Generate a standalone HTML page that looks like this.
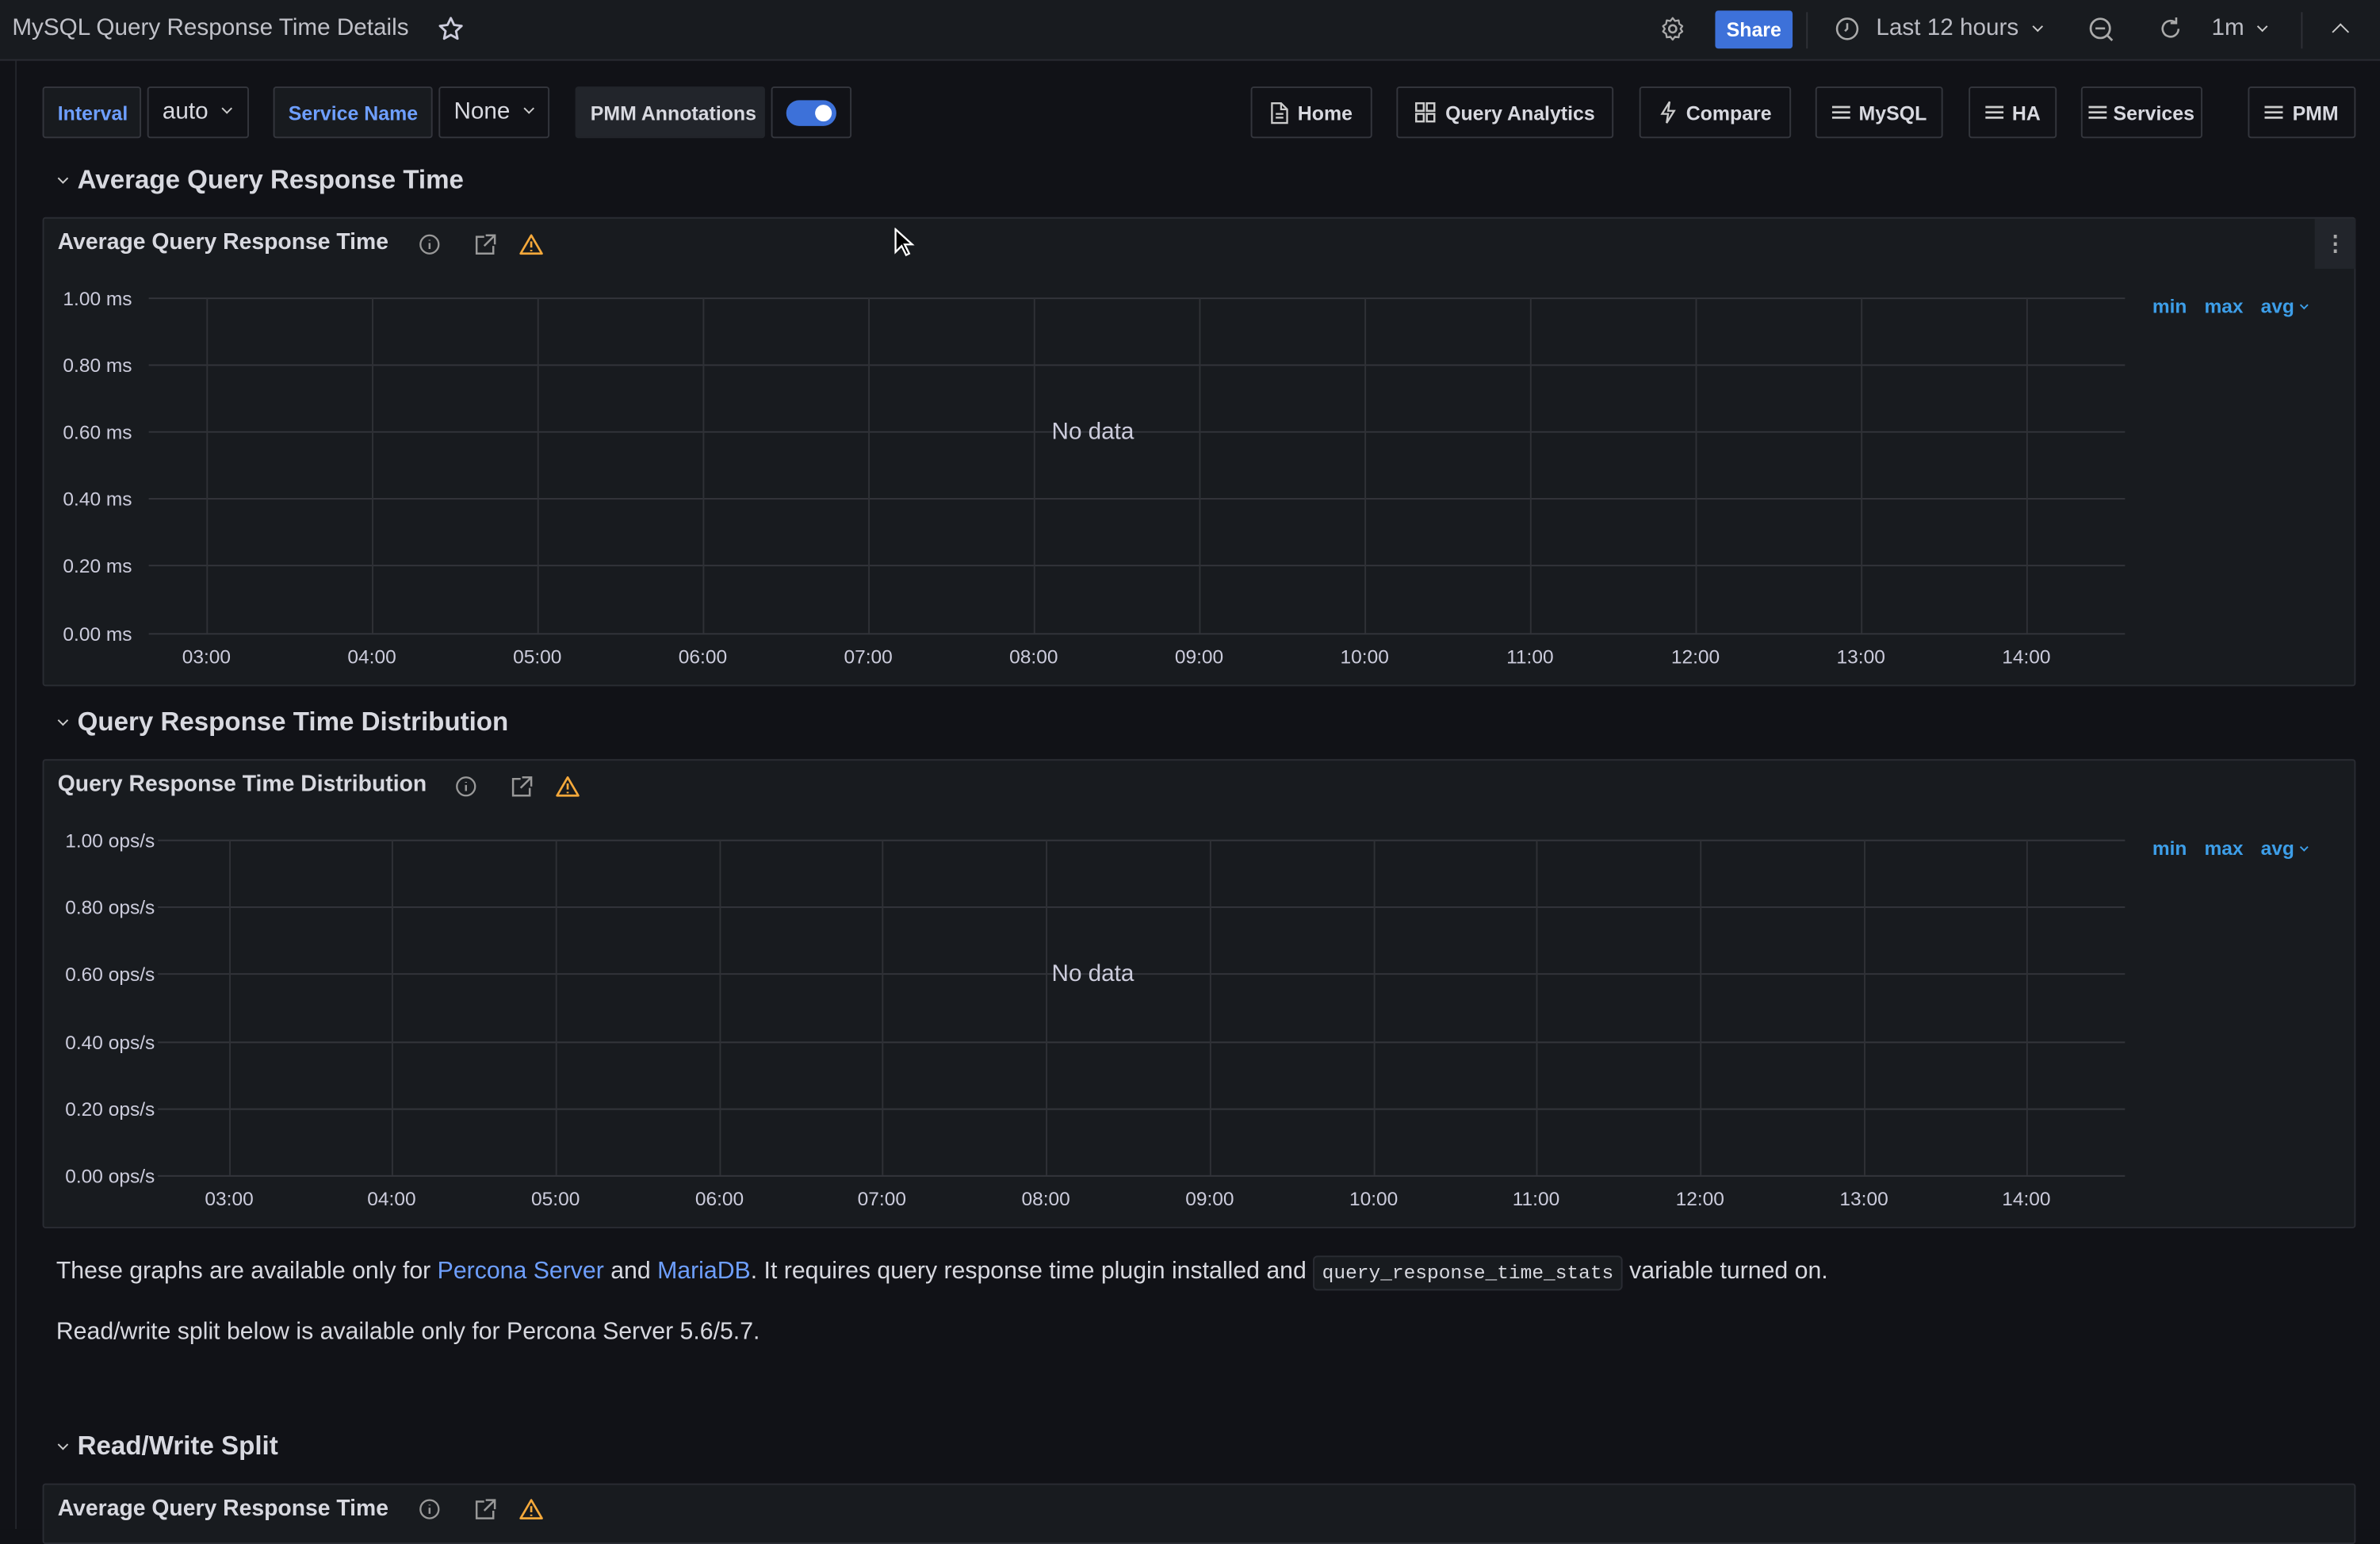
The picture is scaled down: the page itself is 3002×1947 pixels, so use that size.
<!DOCTYPE html>
<html><head><meta charset="utf-8"><style>
*{box-sizing:border-box;margin:0;padding:0}
html,body{width:3002px;height:1928px;overflow:hidden;background:#111217}
#w{position:absolute;left:0;top:0;width:1568px;height:1007px;transform:scale(1.91454,1.9146);transform-origin:0 0;font-family:"Liberation Sans",sans-serif;color:#ccccdc;background:#111217}
.a{position:absolute}
.hdr{left:0;top:0;width:1568px;height:40px;background:#181b1f;border-bottom:1px solid #2a2c33}
.btn{position:absolute;height:34px;top:57px;border:1px solid #34363d;border-radius:2px;background:#111217;font-size:13.5px;color:#d8d9e0;display:flex;align-items:center;padding:0 9px;gap:6px;white-space:nowrap}
.btn svg{flex-shrink:0}
.btn.r{justify-content:center;font-weight:bold;font-size:13px;padding:0 4px}
.lbl{color:#6e9fff;background:#181b1f;font-weight:bold;font-size:13px}
.panel{position:absolute;left:28px;width:1524px;background:#181b1f;border:1px solid #2a2c33;border-radius:2px}
.pt{position:absolute;left:9px;top:8px;font-size:14.8px;color:#d8d9e0;font-weight:bold}
.sec{position:absolute;left:37px;font-size:17.3px;font-weight:bold;color:#d8d9e0}
.sec:before{content:"";position:absolute;left:2px;top:7px;width:4px;height:4px;border-right:1.3px solid #ccc;border-bottom:1.3px solid #ccc;transform:rotate(45deg)}
.sec span{margin-left:14px}
svg text{font-family:"Liberation Sans",sans-serif}
.leg{position:absolute;top:50px;left:1389px;font-size:12.8px;font-weight:bold;color:#3d9ee8;word-spacing:8px}
.chev{display:inline-block;width:5px;height:5px;border-right:1.2px solid #ccc;border-bottom:1.2px solid #ccc;transform:rotate(45deg);margin-left:6px;position:relative;top:-3px}
</style></head><body><div id="w">
<div class="a hdr"></div>
<div class="a" style="left:8px;top:10px;font-size:15.5px;color:#c0c1c8">MySQL Query Response Time Details</div>
<svg class="a" style="left:288px;top:10px" width="18" height="18" viewBox="0 0 24 24"><path d="M12 2.5l2.9 6.1 6.6.8-4.9 4.6 1.3 6.6L12 17.3 6.1 20.6l1.3-6.6L2.5 9.4l6.6-.8z" fill="none" stroke="#ccccdc" stroke-width="2" stroke-linejoin="round"/></svg>
<svg class="a" style="left:1093px;top:10px" width="18" height="18" viewBox="0 0 24 24"><circle cx="12" cy="12" r="3.2" fill="none" stroke="#aaa" stroke-width="1.8"/><path d="M12 2.5l2 2.6 3.2-.6.6 3.2 2.7 1.9-1.6 2.4 1.6 2.4-2.7 1.9-.6 3.2-3.2-.6-2 2.6-2-2.6-3.2.6-.6-3.2L3.5 14.4 5.1 12 3.5 9.6l2.7-1.9.6-3.2 3.2.6z" fill="none" stroke="#aaa" stroke-width="1.6" stroke-linejoin="round"/></svg>
<div class="a" style="left:1130px;top:7px;width:51px;height:25px;background:#3d71d9;border-radius:2px;color:#fff;font-size:13px;font-weight:bold;text-align:center;line-height:25px">Share</div>
<div class="a" style="left:1190px;top:8px;width:1px;height:24px;background:#2f3137"></div>
<svg class="a" style="left:1208px;top:10px" width="18" height="18" viewBox="0 0 24 24"><circle cx="12" cy="12" r="9" fill="none" stroke="#aaa" stroke-width="1.8"/><path d="M12 7v5l-2 2" fill="none" stroke="#aaa" stroke-width="1.8"/></svg>
<div class="a" style="left:1236px;top:10px;font-size:15.5px;color:#bbbcc4;white-space:nowrap">Last 12 hours<span class="chev" style="margin-left:10px"></span></div>
<svg class="a" style="left:1375px;top:10px" width="19" height="19" viewBox="0 0 24 24"><circle cx="11" cy="11" r="8" fill="none" stroke="#aaa" stroke-width="1.8"/><path d="M7 11h8M17 17l4 4" stroke="#aaa" stroke-width="1.8"/></svg>
<svg class="a" style="left:1421px;top:10px" width="18" height="18" viewBox="0 0 24 24"><path d="M19 12a7 7 0 1 1-2-5M17 2v5h-5" fill="none" stroke="#aaa" stroke-width="1.8"/></svg>
<div class="a" style="left:1457px;top:10px;font-size:15.5px;color:#bbbcc4">1m<span class="chev" style="margin-left:9px"></span></div>
<div class="a" style="left:1516px;top:8px;width:1px;height:24px;background:#2f3137"></div>
<div class="a" style="left:1538px;top:17px;width:8px;height:8px;border-left:1.5px solid #ccc;border-top:1.5px solid #ccc;transform:rotate(45deg)"></div>
<div class="a" style="left:10px;top:40px;width:1px;height:967px;background:#24262c"></div>

<div class="btn lbl" style="left:28px;width:65px">Interval</div>
<div class="btn" style="left:97px;width:67px;font-size:15.5px">auto<span class="chev" style="margin-left:4px"></span></div>
<div class="btn lbl" style="left:180px;width:105px">Service Name</div>
<div class="btn" style="left:289px;width:73px;font-size:15.5px">None<span class="chev" style="margin-left:4px"></span></div>
<div class="btn" style="left:379px;width:125px;background:#22252b;border-color:#22252b;font-weight:bold;font-size:13px">PMM Annotations</div>
<div class="btn" style="left:508px;width:53px;justify-content:center"><div style="width:33px;height:17px;border-radius:9px;background:#3d71d9;position:relative"><div style="position:absolute;right:3px;top:3px;width:11px;height:11px;border-radius:50%;background:#fff"></div></div></div>

<div class="btn r" style="left:824px;width:80px"><svg width="12" height="15" viewBox="0 0 12 15"><path d="M1 1h6l4 4v9H1zM7 1v4h4M3.5 8h5M3.5 10.5h5" fill="none" stroke="#ccc" stroke-width="1.2"/></svg>Home</div>
<div class="btn r" style="left:920px;width:143px"><svg width="14" height="14" viewBox="0 0 14 14"><g fill="none" stroke="#ccc" stroke-width="1.3"><rect x="1" y="1" width="5" height="5"/><rect x="8" y="1" width="5" height="5"/><rect x="1" y="8" width="5" height="5"/><rect x="8" y="8" width="5" height="5"/></g></svg>Query Analytics</div>
<div class="btn r" style="left:1080px;width:100px"><svg width="12" height="16" viewBox="0 0 12 16"><path d="M7 1L2 9h4l-1 6 5-8H6z" fill="none" stroke="#ccc" stroke-width="1.2"/></svg>Compare</div>
<div class="btn r" style="left:1196px;width:84px"><svg width="12" height="10" viewBox="0 0 12 10"><path d="M0 1.5h12M0 5h12M0 8.5h12" stroke="#ccc" stroke-width="1.4"/></svg>MySQL</div>
<div class="btn r" style="left:1297px;width:58px"><svg width="12" height="10" viewBox="0 0 12 10"><path d="M0 1.5h12M0 5h12M0 8.5h12" stroke="#ccc" stroke-width="1.4"/></svg>HA</div>
<div class="btn r" style="left:1371px;width:80px;gap:4px"><svg width="12" height="10" viewBox="0 0 12 10"><path d="M0 1.5h12M0 5h12M0 8.5h12" stroke="#ccc" stroke-width="1.4"/></svg>Services</div>
<div class="btn r" style="left:1481px;width:71px"><svg width="12" height="10" viewBox="0 0 12 10"><path d="M0 1.5h12M0 5h12M0 8.5h12" stroke="#ccc" stroke-width="1.4"/></svg>PMM</div>

<div class="sec" style="top:108px"><span>Average Query Response Time</span></div>
<div class="panel" style="top:143px;height:309px">
<div class="pt">Average Query Response Time</div>
<div class="a" style="left:1496px;top:0;width:27px;height:33px;background:#22252b;color:#aaa;text-align:center;line-height:33px;font-size:14px;font-weight:bold">&#8942;</div>
<div class="leg">min max avg<span class="chev" style="border-color:#3d9ee8;margin-left:4px;width:4px;height:4px"></span></div>
</div>
<svg class="a" style="left:275px;top:153px" width="90" height="16" viewBox="0 0 90 16"><circle cx="8" cy="8" r="6" fill="none" stroke="#999" stroke-width="1.2"/><path d="M8 7v4M8 5v.5" stroke="#999" stroke-width="1.3"/><path d="M44 3h-5v11h11v-5M45 2h6v6M51 2l-7 7" fill="none" stroke="#999" stroke-width="1.3"/><path d="M75 2L68 14h14z" fill="none" stroke="#f5a93b" stroke-width="1.4" stroke-linejoin="round"/><path d="M75 6v4M75 11.5v1" stroke="#f5a93b" stroke-width="1.4"/></svg>
<svg class="a" style="left:0;top:180px" width="1568" height="270">
<g stroke="#2f3136" stroke-width="1">
<path d="M98 16.5H1400M98 60.5H1400M98 104.5H1400M98 148.5H1400M98 192.5H1400M98 237.5H1400" stroke="#33353b"/>
<path d="M136.5 16V237M245.5 16V237M354.5 16V237M463.5 16V237M572.5 16V237M681.5 16V237M790.5 16V237M899.5 16V237M1008.5 16V237M1117.5 16V237M1226.5 16V237M1335.5 16V237"/></g>
<g fill="#ccccdc" font-size="12.8" text-anchor="end"><text x="87" y="21">1.00 ms</text><text x="87" y="65">0.80 ms</text><text x="87" y="109">0.60 ms</text><text x="87" y="153">0.40 ms</text><text x="87" y="197">0.20 ms</text><text x="87" y="242">0.00 ms</text></g>
<g fill="#ccccdc" font-size="12.8" text-anchor="middle"><text x="136" y="257">03:00</text><text x="245" y="257">04:00</text><text x="354" y="257">05:00</text><text x="463" y="257">06:00</text><text x="572" y="257">07:00</text><text x="681" y="257">08:00</text><text x="790" y="257">09:00</text><text x="899" y="257">10:00</text><text x="1008" y="257">11:00</text><text x="1117" y="257">12:00</text><text x="1226" y="257">13:00</text><text x="1335" y="257">14:00</text><text x="720" y="109" font-size="15.5">No data</text></g>
</svg>

<div class="sec" style="top:465px"><span>Query Response Time Distribution</span></div>
<div class="panel" style="top:500px;height:309px">
<div class="pt">Query Response Time Distribution</div>
<div class="leg">min max avg<span class="chev" style="border-color:#3d9ee8;margin-left:4px;width:4px;height:4px"></span></div>
</div>
<svg class="a" style="left:299px;top:510px" width="90" height="16" viewBox="0 0 90 16"><circle cx="8" cy="8" r="6" fill="none" stroke="#999" stroke-width="1.2"/><path d="M8 7v4M8 5v.5" stroke="#999" stroke-width="1.3"/><path d="M44 3h-5v11h11v-5M45 2h6v6M51 2l-7 7" fill="none" stroke="#999" stroke-width="1.3"/><path d="M75 2L68 14h14z" fill="none" stroke="#f5a93b" stroke-width="1.4" stroke-linejoin="round"/><path d="M75 6v4M75 11.5v1" stroke="#f5a93b" stroke-width="1.4"/></svg>
<svg class="a" style="left:0;top:537px" width="1568" height="270">
<g stroke="#2f3136" stroke-width="1">
<path d="M104 16.5H1400M104 60.5H1400M104 104.5H1400M104 149.5H1400M104 193.5H1400M104 237.5H1400" stroke="#33353b"/>
<path d="M151.5 16V237M258.5 16V237M366.5 16V237M474.5 16V237M581.5 16V237M689.5 16V237M797.5 16V237M905.5 16V237M1012.5 16V237M1120.5 16V237M1228.5 16V237M1335.5 16V237"/></g>
<g fill="#ccccdc" font-size="12.8" text-anchor="end"><text x="102" y="21">1.00 ops/s</text><text x="102" y="65">0.80 ops/s</text><text x="102" y="109">0.60 ops/s</text><text x="102" y="154">0.40 ops/s</text><text x="102" y="198">0.20 ops/s</text><text x="102" y="242">0.00 ops/s</text></g>
<g fill="#ccccdc" font-size="12.8" text-anchor="middle"><text x="151" y="257">03:00</text><text x="258" y="257">04:00</text><text x="366" y="257">05:00</text><text x="474" y="257">06:00</text><text x="581" y="257">07:00</text><text x="689" y="257">08:00</text><text x="797" y="257">09:00</text><text x="905" y="257">10:00</text><text x="1012" y="257">11:00</text><text x="1120" y="257">12:00</text><text x="1228" y="257">13:00</text><text x="1335" y="257">14:00</text><text x="720" y="109" font-size="15.5">No data</text></g>
</svg>

<div class="a" style="left:37px;top:829px;font-size:15.8px;color:#d8d9e0;white-space:nowrap">These graphs are available only for <span style="color:#6e9fff">Percona Server</span> and <span style="color:#6e9fff">MariaDB</span>. It requires query response time plugin installed and <span style="font-family:'Liberation Mono',monospace;font-size:12.8px;background:#181b1f;border:1px solid #2a2c33;border-radius:3px;padding:3px 5px">query_response_time_stats</span> variable turned on.</div>
<div class="a" style="left:37px;top:869px;font-size:15.8px;color:#d8d9e0">Read/write split below is available only for Percona Server 5.6/5.7.</div>

<div class="sec" style="top:942px"><span>Read/Write Split</span></div>
<div class="panel" style="top:977px;height:40px">
<div class="pt">Average Query Response Time</div>
</div>
<svg class="a" style="left:275px;top:986px" width="90" height="16" viewBox="0 0 90 16"><circle cx="8" cy="8" r="6" fill="none" stroke="#999" stroke-width="1.2"/><path d="M8 7v4M8 5v.5" stroke="#999" stroke-width="1.3"/><path d="M44 3h-5v11h11v-5M45 2h6v6M51 2l-7 7" fill="none" stroke="#999" stroke-width="1.3"/><path d="M75 2L68 14h14z" fill="none" stroke="#f5a93b" stroke-width="1.4" stroke-linejoin="round"/><path d="M75 6v4M75 11.5v1" stroke="#f5a93b" stroke-width="1.4"/></svg>
<svg class="a" style="left:589px;top:150px" width="14" height="20" viewBox="0 0 14 20"><path d="M1 1v15l4-4 3 6 2-1-3-6h5z" fill="#000" stroke="#fff" stroke-width="1.2"/></svg>
</div></body></html>
